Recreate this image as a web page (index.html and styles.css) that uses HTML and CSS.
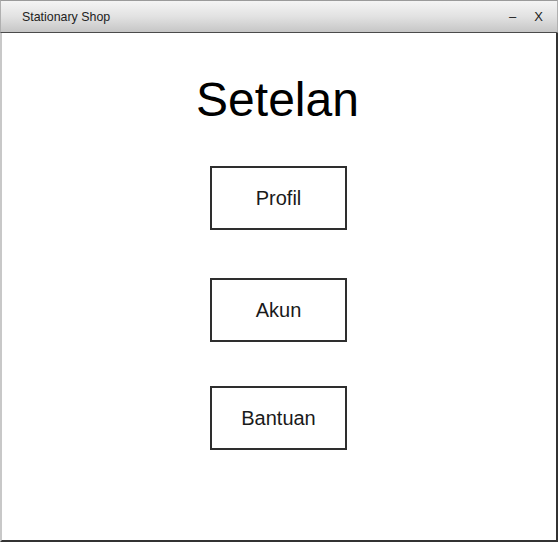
FILE: index.html
```html
<!DOCTYPE html>
<html>
<head>
<meta charset="utf-8">
<link rel="stylesheet" href="styles.css">
</head>
<body>
<div class="window">
  <div class="titlebar">
    <span class="app-title">Stationary Shop</span>
    <div class="controls">
      <span class="ctl">&ndash;</span>
      <span class="ctl">X</span>
    </div>
  </div>
  <div class="content">
    <h1 class="heading">Setelan</h1>
    <div class="menu">
      <div class="btn">Profil</div>
      <div class="btn btn-2">Akun</div>
      <div class="btn btn-3">Bantuan</div>
    </div>
  </div>
</div>
</body>
</html>
```
FILE: styles.css
```css
html, body {
  margin: 0;
  padding: 0;
  background: #ffffff;
}
body {
  font-family: "Liberation Sans", Arial, sans-serif;
  color: #111;
}
.window {
  width: 558px;
  height: 542px;
  box-sizing: border-box;
  display: flex;
  flex-direction: column;
}
.titlebar {
  height: 33px;
  box-sizing: border-box;
  border-top: 1px solid #9a9a9a;
  border-left: 1px solid #b0b0b0;
  border-right: 1px solid #b0b0b0;
  border-bottom: 1px solid #4a4a4a;
  background: linear-gradient(to bottom, #f4f4f4 0%, #e2e2e2 50%, #c6c6c6 100%);
  display: flex;
  align-items: center;
  justify-content: space-between;
  padding: 0 14px 0 21px;
}
.app-title {
  font-size: 12.4px;
  color: #222;
}
.controls {
  display: flex;
  gap: 18px;
  font-size: 13px;
  color: #222;
}
.content {
  flex: 1;
  box-sizing: border-box;
  border-left: 2px solid #c8c8c8;
  border-right: 2px solid #333;
  border-bottom: 2px solid #333;
  display: flex;
  flex-direction: column;
  align-items: center;
}
.heading {
  margin: 43px 0 0 -3px;
  font-size: 48px;
  line-height: 48px;
  font-weight: normal;
  color: #000;
}
.menu {
  margin-top: 42px;
  display: flex;
  flex-direction: column;
  align-items: center;
  margin-left: -1px;
}
.btn {
  width: 137px;
  height: 64px;
  box-sizing: border-box;
  border: 2px solid #2e2e2e;
  display: flex;
  align-items: center;
  justify-content: center;
  font-size: 20px;
  color: #1a1a1a;
}
.btn-2 {
  margin-top: 48px;
}
.btn-3 {
  margin-top: 44px;
}
```
